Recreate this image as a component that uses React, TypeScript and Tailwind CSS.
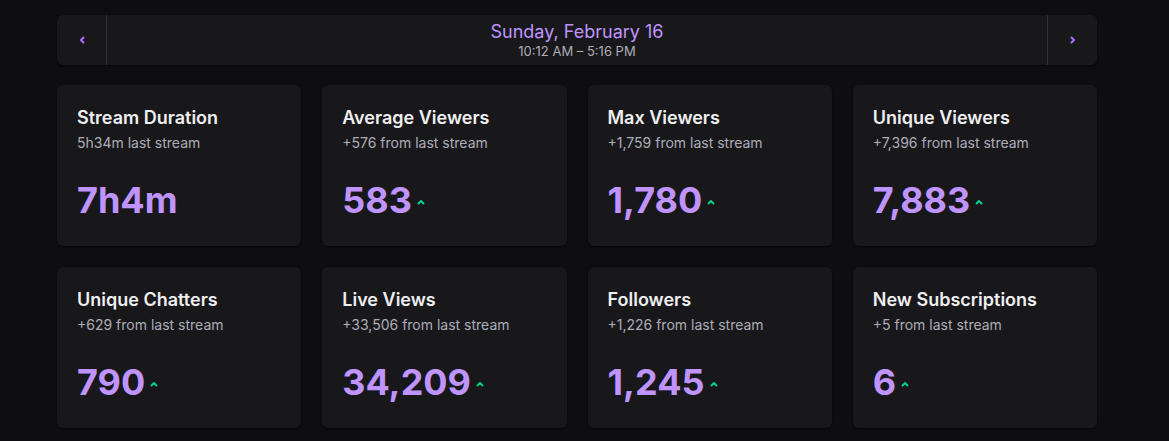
import React from "react";

type Stat = { title: string; sub: string; value: string; up: boolean };

const stats: Stat[] = [
  { title: "Stream Duration", sub: "5h34m last stream", value: "7h4m", up: false },
  { title: "Average Viewers", sub: "+576 from last stream", value: "583", up: true },
  { title: "Max Viewers", sub: "+1,759 from last stream", value: "1,780", up: true },
  { title: "Unique Viewers", sub: "+7,396 from last stream", value: "7,883", up: true },
  { title: "Unique Chatters", sub: "+629 from last stream", value: "790", up: true },
  { title: "Live Views", sub: "+33,506 from last stream", value: "34,209", up: true },
  { title: "Followers", sub: "+1,226 from last stream", value: "1,245", up: true },
  { title: "New Subscriptions", sub: "+5 from last stream", value: "6", up: true },
];

function Chevron({ dir }: { dir: "left" | "right" }) {
  return (
    <svg width="10" height="10" viewBox="0 0 10 10" fill="none">
      <path
        d={dir === "left" ? "M6.5 2.5 L4 5 L6.5 7.5" : "M3.5 2.5 L6 5 L3.5 7.5"}
        stroke="#a970ff"
        strokeWidth="2"
        strokeLinecap="round"
        strokeLinejoin="round"
      />
    </svg>
  );
}

function UpArrow() {
  return (
    <svg width="10" height="8" viewBox="0 0 10 8" fill="none">
      <path d="M2.5 5.5 L5 3 L7.5 5.5" stroke="#00d68f" strokeWidth="1.8" strokeLinecap="round" strokeLinejoin="round" />
    </svg>
  );
}

function StatCard({ s }: { s: Stat }) {
  return (
    <div className="h-[161px] rounded-md bg-[#18181b] px-5 pt-[22px] shadow-[0_1px_2px_rgba(0,0,0,0.6)]">
      <div className="text-[18px] font-semibold leading-[22px] text-[#efeff1]">{s.title}</div>
      <div className="mt-[5px] text-[14px] leading-[18px] text-[#adadb8]">{s.sub}</div>
      <div className="mt-[26px] flex items-center">
        <span className="text-[36px] font-bold leading-[44px] text-[#bf94ff]">{s.value}</span>
        {s.up && (
          <span className="ml-[4px] mt-[4px]">
            <UpArrow />
          </span>
        )}
      </div>
    </div>
  );
}

export default function App() {
  return (
    <div
      className="min-h-[441px] w-full bg-[#0e0e10] pt-[15px]"
      style={{ fontFamily: "Inter, 'Noto Sans', sans-serif" }}
    >
      <div className="ml-[57px] w-[1040px]">
        <div className="flex h-[50px] rounded-md bg-[#18181b] shadow-[0_1px_2px_rgba(0,0,0,0.6)]">
          <button className="flex w-[50px] items-center justify-center border-r border-[#2f2f35]">
            <Chevron dir="left" />
          </button>
          <div className="flex flex-1 flex-col items-center justify-center">
            <div className="text-[18px] leading-[22px] text-[#bf94ff]">Sunday, February 16</div>
            <div className="text-[13px] leading-[17px] text-[#adadb8]">10:12 AM – 5:16 PM</div>
          </div>
          <button className="flex w-[50px] items-center justify-center border-l border-[#2f2f35]">
            <Chevron dir="right" />
          </button>
        </div>
        <div className="mt-[20px] grid grid-cols-4 gap-[21px]">
          {stats.map((s) => (
            <StatCard key={s.title} s={s} />
          ))}
        </div>
      </div>
    </div>
  );
}
